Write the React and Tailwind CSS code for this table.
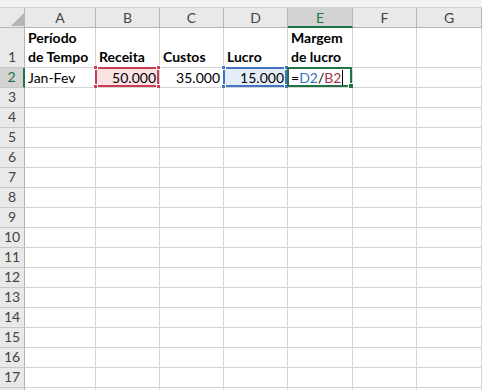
import React from 'react';

const cols = [
  { key: 'A', w: 'w-[71px]' },
  { key: 'B', w: 'w-[64px]' },
  { key: 'C', w: 'w-[64px]' },
  { key: 'D', w: 'w-[64px]' },
  { key: 'E', w: 'w-[65px]' },
  { key: 'F', w: 'w-[64px]' },
  { key: 'G', w: 'w-[65px]' },
];

const emptyRows = Array.from({ length: 15 }, (_, i) => i + 3);

// little squares drawn on the corners of a reference range
const Handle = ({ pos, color }) => (
  <span className={`absolute h-[5px] w-[5px] border border-white ${color} ${pos}`} />
);

const RangeBox = ({ border, fill }) => (
  <div className={`pointer-events-none absolute -left-px -top-px bottom-0 right-0 border-2 ${border}`}>
    <Handle pos="-left-[4px] -top-[4px]" color={fill} />
    <Handle pos="-right-[4px] -top-[4px]" color={fill} />
    <Handle pos="-left-[4px] -bottom-[4px]" color={fill} />
    <Handle pos="-right-[4px] -bottom-[4px]" color={fill} />
  </div>
);

const RowHead = ({ n, active, tall }) => (
  <div
    className={`flex w-[25px] shrink-0 items-end justify-center border-b border-[#c8c8c8] pb-[1px] text-[14px] leading-[18px] ${
      tall ? 'h-[40px]' : 'h-[20px]'
    } ${
      active
        ? 'border-r-2 border-r-[#217346] bg-[#d3d3d3] text-[#217346]'
        : 'border-r border-r-[#b5b5b5] bg-[#e9e9e9] text-[#444]'
    }`}
  >
    {n}
  </div>
);

const Cell = ({ w, tall, className = '', children }) => (
  <div
    className={`relative shrink-0 border-b border-r border-[#d4d4d4] ${w} ${tall ? 'h-[40px]' : 'h-[20px]'} ${className}`}
  >
    {children}
  </div>
);

const HeadText = ({ lines }) => (
  <div className="flex h-full flex-col justify-end px-[3px] pb-[1px] text-[14px] font-bold leading-[19px] text-black">
    {lines.map((l) => (
      <span key={l} className="whitespace-nowrap">{l}</span>
    ))}
  </div>
);

export default function App() {
  return (
    <div className="h-[390px] w-[482px] overflow-hidden bg-white font-['Lato',sans-serif] text-black">
      <div className="h-[8px] border-b border-[#d4d4d4] bg-[#f3f3f3]" />

      {/* column letters */}
      <div className="flex">
        <div className="relative h-[20px] w-[25px] shrink-0 border-b border-r border-[#b5b5b5] bg-[#e9e9e9]">
          <svg className="absolute left-[11px] top-[5px]" width="13" height="13" viewBox="0 0 13 13">
            <polygon points="13,0 13,13 0,13" fill="#b6b6b6" />
          </svg>
        </div>
        {cols.map((c) => (
          <div
            key={c.key}
            className={`flex h-[20px] shrink-0 items-center justify-center border-r text-[14px] ${c.w} ${
              c.key === 'E'
                ? 'border-b-2 border-b-[#217346] border-r-[#b5b5b5] bg-[#d3d3d3] text-[#217346]'
                : 'border-b border-[#b5b5b5] bg-[#e9e9e9] text-[#444]'
            }`}
          >
            {c.key}
          </div>
        ))}
      </div>

      {/* row 1: titles */}
      <div className="flex">
        <RowHead n={1} tall />
        <Cell w="w-[71px]" tall>
          <HeadText lines={['Período', 'de Tempo']} />
        </Cell>
        <Cell w="w-[64px]" tall>
          <HeadText lines={['Receita']} />
        </Cell>
        <Cell w="w-[64px]" tall>
          <HeadText lines={['Custos']} />
        </Cell>
        <Cell w="w-[64px]" tall>
          <HeadText lines={['Lucro']} />
        </Cell>
        <Cell w="w-[65px]" tall>
          <HeadText lines={['Margem', 'de lucro']} />
        </Cell>
        <Cell w="w-[64px]" tall />
        <Cell w="w-[65px]" tall />
      </div>

      {/* row 2: values */}
      <div className="flex text-[14px] leading-[19px]">
        <RowHead n={2} active />
        <Cell w="w-[71px]">
          <div className="px-[3px]">Jan-Fev</div>
        </Cell>
        <Cell w="w-[64px]" className="bg-[#fbe3e5]">
          <div className="px-[3px] text-right">50.000</div>
          <RangeBox border="border-[#c8404f]" fill="bg-[#c8404f]" />
        </Cell>
        <Cell w="w-[64px]">
          <div className="px-[3px] text-right">35.000</div>
        </Cell>
        <Cell w="w-[64px]" className="bg-[#e5edf8]">
          <div className="px-[3px] text-right">15.000</div>
          <RangeBox border="border-[#4472c4]" fill="bg-[#4472c4]" />
        </Cell>
        <Cell w="w-[65px]">
          <div className="flex items-center px-[3px]">
            <span>=</span>
            <span className="text-[#3a73c2]">D2</span>
            <span>/</span>
            <span className="text-[#a3334d]">B2</span>
            <span className="ml-[1px] h-[16px] w-px bg-black" />
          </div>
          <div className="pointer-events-none absolute -left-px -top-px bottom-0 right-0 border-2 border-[#217346]">
            <span className="absolute -bottom-[4px] -right-[4px] h-[6px] w-[6px] border border-white bg-[#217346]" />
          </div>
        </Cell>
        <Cell w="w-[64px]" />
        <Cell w="w-[65px]" />
      </div>

      {emptyRows.map((n) => (
        <div key={n} className="flex">
          <RowHead n={n} />
          {cols.map((c) => (
            <Cell key={c.key} w={c.w} />
          ))}
        </div>
      ))}

      {/* sliver of the next row under the fold */}
      <div className="flex">
        <div className="h-[20px] w-[25px] shrink-0 border-r border-[#b5b5b5] bg-[#e9e9e9]" />
        {cols.map((c) => (
          <Cell key={c.key} w={c.w} />
        ))}
      </div>
    </div>
  );
}
